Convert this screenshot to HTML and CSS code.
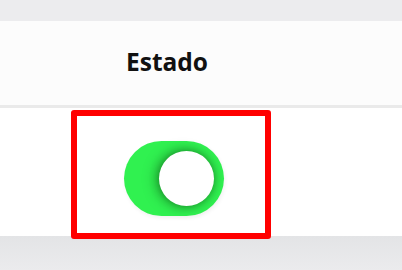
FILE: index.html
```html
<!DOCTYPE html>
<html lang="es">
<head>
<meta charset="utf-8">
<title>Estado</title>
<link rel="stylesheet" href="styles.css">
</head>
<body>
<div class="page">
  <div class="topbar"></div>
  <div class="table">
    <div class="row head">
      <div class="cell">Estado</div>
    </div>
    <div class="row body-row">
      <div class="cell">
        <div class="toggle"><div class="knob"></div></div>
      </div>
      <div class="highlight"></div>
    </div>
  </div>
  <div class="footer"></div>
</div>
</body>
</html>
```
FILE: styles.css
```css
html, body {
  margin: 0;
  padding: 0;
}
body {
  background: #ececee;
  font-family: "Open Sans", "Noto Sans", sans-serif;
  width: 402px;
  height: 270px;
  overflow: hidden;
}
.page {
  display: flex;
  flex-direction: column;
  height: 270px;
}
.topbar {
  height: 21px;
  background: #ececee;
}
.table {
  display: flex;
  flex-direction: column;
}
.row {
  display: flex;
  padding-left: 77px;
}
.head {
  background: #fcfcfc;
  height: 87px;
  box-sizing: border-box;
  padding-top: 25px;
  border-bottom: 3px solid #eaeaea;
}
.head .cell {
  width: 180px;
  text-align: center;
  font-weight: 700;
  font-size: 24.5px;
  line-height: 32px;
  color: #111;
}
.body-row {
  position: relative;
  background: #ffffff;
  height: 128px;
  box-sizing: border-box;
  padding-top: 33px;
}
.toggle {
  margin-left: 47px;
  width: 100px;
  height: 75px;
  border-radius: 38px;
  background: #30f150;
  display: flex;
  align-items: center;
  justify-content: flex-end;
  padding-right: 10px;
  box-sizing: border-box;
  box-shadow: 1px 2px 4px rgba(0, 0, 0, 0.06);
}
.knob {
  width: 55px;
  height: 55px;
  border-radius: 50%;
  background: #ffffff;
  box-shadow: 0 0 10px rgba(0, 40, 0, 0.45), -4px 0 14px rgba(0, 40, 0, 0.25);
}
.highlight {
  position: absolute;
  left: 71px;
  top: 2px;
  width: 200px;
  height: 129px;
  box-sizing: border-box;
  border: 6px solid #ff0000;
  border-radius: 3px;
}
.footer {
  flex: 1;
  background: linear-gradient(#e3e4e6, #ebebed);
}
```
